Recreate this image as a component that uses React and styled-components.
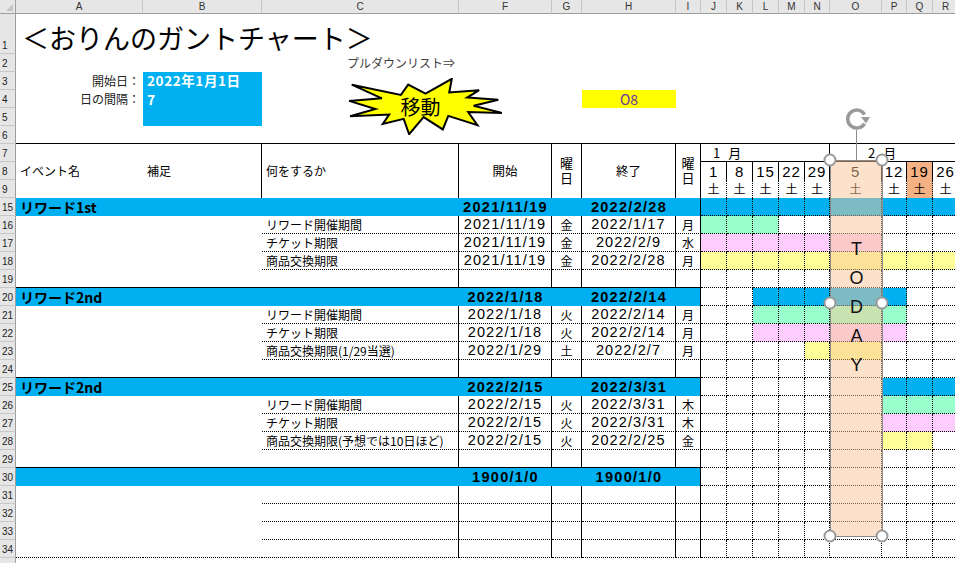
import React from 'react';
import styled, { createGlobalStyle } from 'styled-components';

const GRID = '16px 127px 119px 197px 93px 30px 94px 25px 26px 26px 26px 26px 25px 52px 25px 26px 26px';
const JP = `"Noto Sans CJK JP", "Noto Sans", sans-serif`;
const NUM = `"Liberation Sans", "Noto Sans CJK JP", sans-serif`;
const BLUE = '#00B0F0';
const FILL = { blue: BLUE, green: '#99FFCC', pink: '#FFCCFF', yellow: '#FFFF99' };
const WEEKS = ['1', '8', '15', '22', '29', '5', '12', '19', '26'];
const HILITE = 7;

const Global = createGlobalStyle`
  html, body { margin: 0; padding: 0; background: #fff; overflow: hidden; }
  body { font-family: ${JP}; color: #000; }
  * { box-sizing: border-box; }
`;

const line = (v) =>
  v === 'solid' ? '1px solid #000' : v === 'dot' ? '1px dotted #000' : 'none';

const Page = styled.div`
  position: relative;
  width: 955px;
  height: 563px;
  overflow: hidden;
  background: #fff;
`;

const ColHeaderBar = styled.div`
  display: grid;
  grid-template-columns: ${GRID};
  height: 14px;
  background: #e6e6e6;
`;

const ColLetter = styled.div`
  font-family: "Liberation Sans", sans-serif;
  font-size: 10px;
  line-height: 13px;
  text-align: center;
  color: #333;
  border-right: 1px solid #c6c6c6;
  border-bottom: 1px solid #9e9e9e;
`;

const Corner = styled.div`
  position: relative;
  border-right: 1px solid #9e9e9e;
  border-bottom: 1px solid #9e9e9e;
  &::after {
    content: '';
    position: absolute;
    right: 2px;
    bottom: 2px;
    border-left: 7px solid transparent;
    border-bottom: 7px solid #c4c4c4;
  }
`;

const SheetRow = styled.div`
  display: grid;
  grid-template-columns: ${GRID};
  height: ${(p) => p.$h || 18}px;
`;

const HeaderBand = styled.div`
  display: grid;
  grid-template-columns: ${GRID};
  grid-template-rows: repeat(3, 18px);
`;

const RowNum = styled.div`
  background: #e6e6e6;
  border-right: 1px solid #9e9e9e;
  border-bottom: 1px solid #c8c8c8;
  font-family: "Liberation Sans", sans-serif;
  font-size: 10px;
  line-height: 1;
  color: #222;
  display: flex;
  align-items: flex-end;
  padding: 0 0 2px 2px;
`;

const Cell = styled.div`
  grid-column: span ${(p) => p.$span || 1};
  grid-row: span ${(p) => p.$rows || 1};
  display: flex;
  align-items: ${(p) => (p.$valign === 'bottom' ? 'flex-end' : 'center')};
  justify-content: ${(p) =>
    p.$align === 'center' ? 'center' : p.$align === 'right' ? 'flex-end' : 'flex-start'};
  padding: 0 ${(p) => p.$pr ?? 0}px 0 ${(p) => p.$pl ?? 0}px;
  background: ${(p) => p.$bg || 'transparent'};
  border-right: ${(p) => line(p.$r)};
  border-bottom: ${(p) => line(p.$b)};
  border-top: ${(p) => line(p.$t)};
  font-size: ${(p) => p.$size || 12}px;
  font-weight: ${(p) => (p.$bold ? 700 : 400)};
  color: ${(p) => p.$color || '#000'};
  white-space: nowrap;
  line-height: 1;
  min-width: 0;
`;

const VerticalLabel = styled.span`
  writing-mode: vertical-rl;
  font-size: 13px;
  letter-spacing: 2px;
  line-height: 1;
  margin-top: 2px;
`;

const MonthLabel = styled.span`
  font-size: 13px;
  word-spacing: 5px;
`;

const Title = styled.span`
  font-size: 27px;
  line-height: 1;
  padding-bottom: 3px;
  color: #000;
`;

const DateText = styled.span`
  font-family: ${NUM};
  font-size: 14.5px;
  letter-spacing: ${(p) => (p.$bold ? 1.3 : 1.1)}px;
  font-weight: ${(p) => (p.$bold ? 700 : 400)};
`;

const WeekNum = styled.span`
  font-family: ${NUM};
  font-size: 15px;
  letter-spacing: 0.8px;
`;

const Burst = styled.div`
  position: absolute;
  left: 347px;
  top: 78px;
  width: 157px;
  height: 57px;
  display: flex;
  align-items: center;
  justify-content: center;
  padding: 0 10px 1px 0;
  svg { position: absolute; inset: 0; }
`;

const BurstText = styled.span`
  position: relative;
  font-size: 20px;
  color: #000;
`;

const TodayMarker = styled.div`
  position: absolute;
  left: 830px;
  top: 160px;
  width: 53px;
  height: 377px;
  background: rgba(249, 198, 152, 0.5);
  border: 1px solid #8c8c8c;
  display: flex;
  flex-direction: column;
  align-items: center;
  padding-top: 74px;
`;

const TodayLetter = styled.span`
  font-family: "Liberation Sans", sans-serif;
  font-size: 18px;
  line-height: 29px;
  color: #111;
`;

const Handle = styled.div`
  position: absolute;
  width: 13px;
  height: 13px;
  border-radius: 50%;
  background: #fff;
  border: 2.5px solid #9a9a9a;
  transform: translate(-50%, -50%);
  left: ${(p) => p.$x}px;
  top: ${(p) => p.$y}px;
`;

const RotateStem = styled.div`
  position: absolute;
  left: 856px;
  top: 130px;
  width: 1px;
  height: 30px;
  background: #8c8c8c;
`;

const RotateIcon = styled.svg`
  position: absolute;
  left: 842px;
  top: 106px;
`;

const groups = [
  {
    num: 15, name: 'リワード1st', start: '2021/11/19', end: '2022/2/28', bar: [0, 8],
    items: [
      { num: 16, label: 'リワード開催期間', s: '2021/11/19', sw: '金', e: '2022/1/17', ew: '月', kind: 'green', bar: [0, 2] },
      { num: 17, label: 'チケット期限', s: '2021/11/19', sw: '金', e: '2022/2/9', ew: '水', kind: 'pink', bar: [0, 5] },
      { num: 18, label: '商品交換期限', s: '2021/11/19', sw: '金', e: '2022/2/28', ew: '月', kind: 'yellow', bar: [0, 8] },
    ],
    spacer: 19,
  },
  {
    num: 20, name: 'リワード2nd', start: '2022/1/18', end: '2022/2/14', bar: [2, 6],
    items: [
      { num: 21, label: 'リワード開催期間', s: '2022/1/18', sw: '火', e: '2022/2/14', ew: '月', kind: 'green', bar: [2, 6] },
      { num: 22, label: 'チケット期限', s: '2022/1/18', sw: '火', e: '2022/2/14', ew: '月', kind: 'pink', bar: [2, 6] },
      { num: 23, label: '商品交換期限(1/29当選)', s: '2022/1/29', sw: '土', e: '2022/2/7', ew: '月', kind: 'yellow', bar: [4, 5] },
    ],
    spacer: 24,
  },
  {
    num: 25, name: 'リワード2nd', start: '2022/2/15', end: '2022/3/31', bar: [6, 8],
    items: [
      { num: 26, label: 'リワード開催期間', s: '2022/2/15', sw: '火', e: '2022/3/31', ew: '木', kind: 'green', bar: [6, 8] },
      { num: 27, label: 'チケット期限', s: '2022/2/15', sw: '火', e: '2022/3/31', ew: '木', kind: 'pink', bar: [6, 8] },
      { num: 28, label: '商品交換期限(予想では10日ほど)', s: '2022/2/15', sw: '火', e: '2022/2/25', ew: '金', kind: 'yellow', bar: [6, 7] },
    ],
    spacer: 29,
  },
  {
    num: 30, name: '', start: '1900/1/0', end: '1900/1/0', bar: null,
    items: [
      { num: 31 }, { num: 32 }, { num: 33 }, { num: 34, last: true },
    ],
  },
];

function Gantt({ bar, kind }) {
  return WEEKS.map((w, i) => (
    <Cell key={i} $r="dot" $b="dot" $bg={bar && i >= bar[0] && i <= bar[1] ? FILL[kind] : undefined} />
  ));
}

function GroupRow({ g }) {
  return (
    <SheetRow>
      <RowNum>{g.num}</RowNum>
      <Cell $bg={BLUE} $bold $size={14} $pl={4}>{g.name}</Cell>
      <Cell $bg={BLUE} />
      <Cell $bg={BLUE} />
      <Cell $bg={BLUE} $align="center"><DateText $bold>{g.start}</DateText></Cell>
      <Cell $bg={BLUE} />
      <Cell $bg={BLUE} $align="center"><DateText $bold>{g.end}</DateText></Cell>
      <Cell $bg={BLUE} $r="solid" />
      <Gantt bar={g.bar} kind="blue" />
    </SheetRow>
  );
}

function ItemRow({ it }) {
  const ab = it.last ? 'dot' : undefined;
  return (
    <SheetRow>
      <RowNum>{it.num}</RowNum>
      <Cell $b={ab} />
      <Cell $b={ab} />
      <Cell $b="dot" $r="solid" $pl={4}>{it.label}</Cell>
      <Cell $b="dot" $r="solid" $align="center"><DateText>{it.s}</DateText></Cell>
      <Cell $b="dot" $r="solid" $align="center">{it.sw}</Cell>
      <Cell $b="dot" $r="solid" $align="center"><DateText>{it.e}</DateText></Cell>
      <Cell $b="dot" $r="solid" $align="center">{it.ew}</Cell>
      <Gantt bar={it.bar} kind={it.kind} />
    </SheetRow>
  );
}

function SpacerRow({ num }) {
  return (
    <SheetRow>
      <RowNum>{num}</RowNum>
      <Cell $b="solid" />
      <Cell $b="solid" />
      <Cell $b="solid" $r="solid" />
      <Cell $b="solid" $r="solid" />
      <Cell $b="solid" $r="solid" />
      <Cell $b="solid" $r="solid" />
      <Cell $b="solid" $r="solid" />
      <Gantt />
    </SheetRow>
  );
}

function StarBurst() {
  const pts = '10800,5800 14522,0 14155,5325 18380,4457 16702,7315 21097,8137 17607,10475 21600,13290 16837,12942 18145,18095 14020,14457 13247,19737 10532,14935 8485,21600 7715,15627 4762,17617 5667,13937 135,14587 3722,11775 0,8615 4627,7617 370,2295 7312,6320 8352,2295';
  return (
    <Burst>
      <svg width="157" height="57" viewBox="-300 -300 22200 22200" preserveAspectRatio="none">
        <polygon points={pts} fill="#FFFF00" stroke="#000" strokeWidth="2" vectorEffect="non-scaling-stroke" strokeLinejoin="miter" />
      </svg>
      <BurstText>移動</BurstText>
    </Burst>
  );
}

export default function App() {
  const letters = ['A', 'B', 'C', 'F', 'G', 'H', 'I', 'J', 'K', 'L', 'M', 'N', 'O', 'P', 'Q', 'R'];
  return (
    <Page>
      <Global />
      <ColHeaderBar>
        <Corner />
        {letters.map((l) => <ColLetter key={l}>{l}</ColLetter>)}
      </ColHeaderBar>

      <SheetRow $h={40}>
        <RowNum>1</RowNum>
        <Cell $span={3} $valign="bottom" $pl={6}><Title>＜おりんのガントチャート＞</Title></Cell>
      </SheetRow>
      <SheetRow>
        <RowNum>2</RowNum>
        <Cell />
        <Cell />
        <Cell $align="right" $pr={4} $color="#404040">プルダウンリスト⇒</Cell>
      </SheetRow>
      <SheetRow>
        <RowNum>3</RowNum>
        <Cell $align="right" $pr={3} $color="#222">開始日：</Cell>
        <Cell $bg={BLUE} $color="#fff" $bold $size={13.5} $pl={4}><span style={{ letterSpacing: '0.6px' }}>2022年1月1日</span></Cell>
      </SheetRow>
      <SheetRow>
        <RowNum>4</RowNum>
        <Cell $align="right" $pr={3} $color="#222">日の間隔：</Cell>
        <Cell $bg={BLUE} $color="#fff" $bold $size={14} $pl={4}>7</Cell>
        <Cell />
        <Cell />
        <Cell />
        <Cell $bg="#FFFF00" $align="center" $color="#7030A0" $size={14}>O8</Cell>
      </SheetRow>
      <SheetRow>
        <RowNum>5</RowNum>
        <Cell />
        <Cell $bg={BLUE} />
      </SheetRow>
      <SheetRow>
        <RowNum>6</RowNum>
        {letters.map((l) => <Cell key={l} $b="solid" />)}
      </SheetRow>

      <HeaderBand>
        <RowNum>7</RowNum>
        <Cell $rows={3} $pl={4}>イベント名</Cell>
        <Cell $rows={3} $r="solid" $pl={4}>補足</Cell>
        <Cell $rows={3} $r="solid" $pl={4}>何をするか</Cell>
        <Cell $rows={3} $r="solid" $align="center" $size={12.5}>開始</Cell>
        <Cell $rows={3} $r="solid" $align="center"><VerticalLabel>曜日</VerticalLabel></Cell>
        <Cell $rows={3} $r="solid" $align="center" $size={12.5}>終了</Cell>
        <Cell $rows={3} $r="solid" $align="center"><VerticalLabel>曜日</VerticalLabel></Cell>
        <Cell $span={5} $r="solid" $b="solid" $pl={12}><MonthLabel>1 月</MonthLabel></Cell>
        <Cell $span={4} $b="solid" $pl={38}><MonthLabel>2 月</MonthLabel></Cell>
        <RowNum>8</RowNum>
        {WEEKS.map((w, i) => (
          <Cell key={w} $r="solid" $align="center" $bg={i === HILITE ? '#F4B183' : undefined}><WeekNum>{w}</WeekNum></Cell>
        ))}
        <RowNum>9</RowNum>
        {WEEKS.map((w, i) => (
          <Cell key={w} $r="dot" $align="center" $size={12} $bg={i === HILITE ? '#F4B183' : undefined}>土</Cell>
        ))}
      </HeaderBand>

      {groups.map((g) => (
        <React.Fragment key={g.num}>
          <GroupRow g={g} />
          {g.items.map((it) => <ItemRow key={it.num} it={it} />)}
          {g.spacer && <SpacerRow num={g.spacer} />}
        </React.Fragment>
      ))}
      <SheetRow>
        <RowNum />
      </SheetRow>

      <StarBurst />

      <RotateStem />
      <RotateIcon width="36" height="26" viewBox="0 0 36 26">
        <path d="M 22.5 17.5 A 9 9 0 1 1 22.5 8.5" fill="none" stroke="#9a9a9a" strokeWidth="3.5" />
        <path d="M 19 11 L 28 11 L 24 17.5 Z" fill="#9a9a9a" />
      </RotateIcon>
      <TodayMarker>
        {'TODAY'.split('').map((c, i) => <TodayLetter key={i}>{c}</TodayLetter>)}
      </TodayMarker>
      <Handle $x={830} $y={160} />
      <Handle $x={882} $y={160} />
      <Handle $x={830} $y={303} />
      <Handle $x={882} $y={303} />
      <Handle $x={830} $y={536} />
      <Handle $x={882} $y={536} />
    </Page>
  );
}
